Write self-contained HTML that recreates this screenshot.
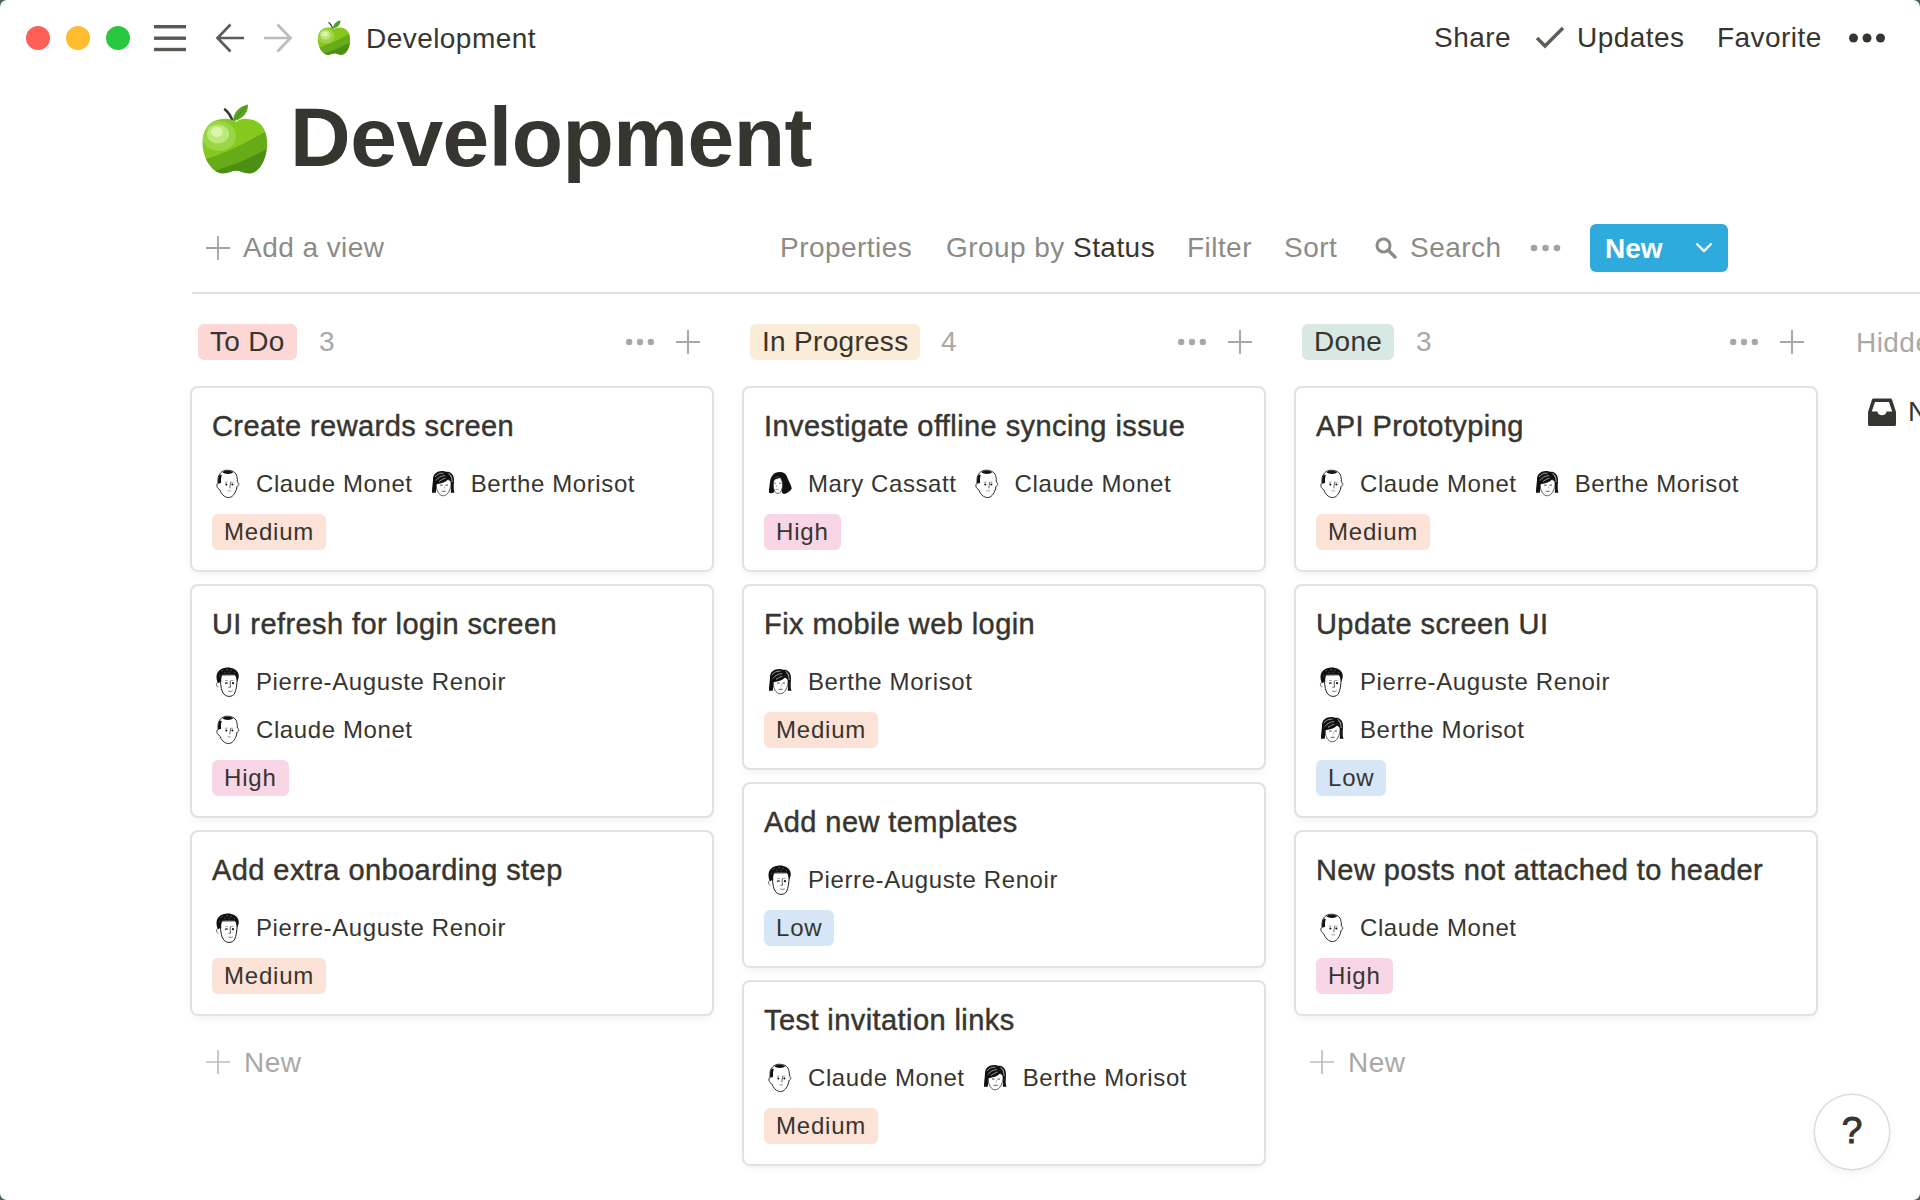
<!DOCTYPE html>
<html><head><meta charset="utf-8">
<style>
*{box-sizing:border-box;margin:0;padding:0}
html,body{width:1920px;height:1200px;overflow:hidden;background:#47636c}
body{font-family:"Liberation Sans",sans-serif;color:#37352f}
#win{position:absolute;left:0;top:0;width:1920px;height:1200px;background:#fff;border-radius:7px;overflow:hidden}
.abs{position:absolute}
.tl{position:absolute;top:26px;width:24px;height:24px;border-radius:50%}
.t28{font-size:28px;white-space:nowrap;letter-spacing:0.45px}
.grey{color:#8d8b87}
.col{position:absolute;top:388px;width:520px;display:flex;flex-direction:column;gap:16px}
.card{position:relative;background:#fff;border-radius:6px;box-shadow:0 0 0 2px #e2e2e1,0 4px 8px rgba(15,15,15,0.06);padding:10px 20px 20px 20px}
.ttl{font-size:29px;line-height:56px;height:56px;white-space:nowrap;-webkit-text-stroke:0.45px #37352f;letter-spacing:0.42px}
.rows{margin-top:6px}
.row{height:48px;display:flex;align-items:center;font-size:24px;white-space:nowrap;letter-spacing:0.6px}
.av{width:32px;height:32px;margin-right:12px;flex:none}
.p2{margin-left:14px}
.tag{display:inline-block;margin-top:6px;height:36px;line-height:36px;font-size:24px;padding:0 12px;border-radius:6px;white-space:nowrap;letter-spacing:0.8px}
.med{background:#fde2d7}
.high{background:#f9d6e6}
.low{background:#d7e6f6}
.hdr{position:absolute;top:324px;height:36px;line-height:36px;font-size:28px;padding:0 12px;border-radius:6px;white-space:nowrap;letter-spacing:0.3px}
.cnt{position:absolute;top:324px;line-height:36px;font-size:28px;color:#aaa9a6}
</style></head><body>
<svg width="0" height="0" style="position:absolute">
<defs>
<clipPath id="appleclip"><path d="M41,24 C36,20 30,20.5 24,21.5 C14,23 7.5,32 7.5,45 C7.5,58 15,72 25,75 C31,76.5 36,72.5 41,72.5 C46,72.5 51,76.5 57,75 C67,72 72,58 72,45 C72,32 66,23 56,21.5 C50,20.5 46,20 41,24Z"/></clipPath>
<symbol id="apple" viewBox="0 0 80 82">
<path d="M30,11.5 C33,14 36,18 37.6,23.5" stroke="#3a3a36" stroke-width="2.6" fill="none" stroke-linecap="round"/>
<path d="M38,23.5 C38,14 45,8 53,6.5 C53.5,15 47,21.5 38,23.5Z" fill="#5aa622"/>
<path d="M40,21 C44,16 48,12 51,9" stroke="#4a9418" stroke-width="1.2" fill="none"/>
<g clip-path="url(#appleclip)">
<rect x="0" y="0" width="80" height="82" fill="#86c91e"/>
<path d="M0,64 C25,58 50,46 80,28 V82 H0Z" fill="#67ab19"/>
<path d="M0,78 C25,72 55,62 80,46 V82 H0Z" fill="#4d8f15"/>
<ellipse cx="24" cy="38" rx="17" ry="15" fill="#9cd649" opacity="0.9"/>
<ellipse cx="23" cy="36" rx="11" ry="9.5" fill="#bde878"/>
<ellipse cx="22" cy="34" rx="6" ry="5" fill="#dcf5ad"/>
</g>
</symbol>
<symbol id="claude" viewBox="0 0 32 32">
<path d="M15,2.2 C10,2.2 6,6 6,12 L6,15.5 C4.3,16 4.5,19.5 6.8,21 C8,22 8.5,23 9,24.5 C11,28 14,29.6 16.6,29.6 C20,29.6 23,26 24.5,21 L25,18.2 C27.2,18 27.4,14.6 25.3,14 C25.5,11 25,8 24,6 C22,3 18,2.2 15,2.2Z" fill="#fff" stroke="#222" stroke-width="0.95"/>
<path d="M25.3,14.2 C26.8,15 26.6,17.6 25,18" fill="#ddd" stroke="none"/>
<path d="M10.5,4.2 C13,2.3 18,2.2 21,4.2 C19.5,6.5 12.5,6.5 10.5,4.2Z" fill="#111"/>
<path d="M7.8,6.5 C6.2,9 5.8,12 6.2,15.8 L9.2,14.8 C8.8,12 9,9 9.8,7Z" fill="#111"/>
<path d="M12.8,14.3 L15.5,14.1 M18.6,14.1 L21.4,14.3" stroke="#777" stroke-width="0.7"/>
<circle cx="14.3" cy="16.5" r="1.05" fill="#111"/><circle cx="20.4" cy="16.5" r="1.05" fill="#111"/>
<path d="M18.7,14.2 C18.2,16.5 18,18.5 17.8,20.3" stroke="#333" stroke-width="0.75" fill="none"/>
<path d="M15.4,22.6 C16.5,23.1 18,23.1 19,22.7" stroke="#888" stroke-width="0.8" fill="none"/>
</symbol>
<symbol id="berthe" viewBox="0 0 32 32">
<path d="M9,15 C8.8,22 12,27.8 16.2,27.8 C20.5,27.8 24,22 24.2,14 C22.5,11.5 20.5,11 19.5,12 C17.5,14 13,15 9,15Z" fill="#fff" stroke="#333" stroke-width="0.8"/>
<path d="M5,24.8 C5,20 6,14 6,11 C6,6 10,3 15,3 C17,3 18,3.6 19,3.8 C22,3 27,5 27,12 C27,17 26,21 27.5,24.8 L23.8,24.8 C24,21 24.5,16 23.6,13.4 C22.5,11.8 21,11.3 20,12.2 C18,14.3 14,15.3 9.6,16.2 C9,19 9.2,22 8.8,24.8Z" fill="#111"/>
<path d="M8,9 C10,6 13,5 16.5,5.2 M9,12.5 C11,9.5 14,8 18,7.5 M12,13.5 C14,12 16,11 18.5,10" stroke="#c8c8c8" stroke-width="0.7" fill="none"/>
<path d="M21.5,5.5 C24,7 25,10 25.2,14" stroke="#bbb" stroke-width="0.9" fill="none"/>
<path d="M22,6 C23.5,6.5 24.5,8 24.5,9.5" stroke="#999" stroke-width="0.8" fill="none"/>
<path d="M13,17 L15.5,17.1 M18.6,17.1 L21,17" stroke="#444" stroke-width="1"/>
<path d="M17.8,17.5 C17.6,19 17.4,20 17,20.8" stroke="#999" stroke-width="0.6" fill="none"/>
<path d="M14.6,23.3 L18.8,23.3" stroke="#555" stroke-width="0.9"/>
</symbol>
<symbol id="renoir" viewBox="0 0 32 32">
<path d="M5.8,16.6 C3.8,16.5 3.8,20.6 6.3,21.2" fill="#fff" stroke="#555" stroke-width="0.8"/>
<path d="M8.8,9 C8.3,15 8.5,22 10.5,26 C12,29 14.5,30.4 17,30.4 C20,30.4 22,29 22.8,27 C24,24 24.8,20 25,16 C25.3,12 24.8,9.5 23,8.8Z" fill="#fff" stroke="#222" stroke-width="1"/>
<path d="M15.5,1.6 C9,1.6 4.5,5.5 4.5,11 C4.5,13.5 5.2,16 6,17.2 L9.2,15.5 C9,12.5 9.4,10 10.4,8.8 C14,8.5 19,8.4 23,8.8 C24,10.5 24.8,13 25,15.5 C26.5,13.5 27,11 26.6,8.5 C25.6,4 21,1.6 15.5,1.6Z" fill="#111"/>
<path d="M9,5 L11,4.5 M14,3.5 L16,4 M18,4.5 L20,4 M7,10 L8,9 M12,6 L13.5,6.5 M22,6 L23,7 M16.5,6.5 L18,6" stroke="#777" stroke-width="0.6"/>
<path d="M13.2,14.6 L16,14.4 M19,14.4 L21.8,14.6" stroke="#888" stroke-width="0.7"/>
<path d="M13,17.4 C14,16.8 15.2,16.8 15.8,17.4" stroke="#222" stroke-width="1.3" fill="none"/>
<circle cx="21" cy="17.2" r="1.1" fill="#111"/>
<path d="M18.4,14.5 C18,17 18.2,19 18.6,21 L16.4,21.4" stroke="#333" stroke-width="0.8" fill="none"/>
<path d="M16.2,25 C17.5,25.5 19.5,25.5 20.7,25" stroke="#666" stroke-width="0.9" fill="none"/>
</symbol>
<symbol id="mary" viewBox="0 0 32 32">
<path d="M16,4 C9,4 6.5,9 6,14 C5.5,19 4.5,22 5,24.8 C6.5,25.6 8.5,25.4 10,24.2 L12,20 L17,20 C17.5,23 18,25 19,25.8 C22,26.4 25.5,24 27.8,20.5 C27,16 24.5,13 23.5,10 C22.5,6 19.5,4 16,4Z" fill="#111"/>
<ellipse cx="13.9" cy="17" rx="4.6" ry="8.6" fill="#fff" stroke="#333" stroke-width="0.7"/>
<path d="M9.4,12 C11,9.5 14,8 17,8.5 C16,10 13,11 9.4,12Z" fill="#111"/>
<path d="M10.1,15.3 L11.8,15.3 M15,15.3 L17.2,15.3" stroke="#555" stroke-width="0.8"/>
<path d="M12.6,17 L12.2,18.4 L13,18.6" stroke="#888" stroke-width="0.6" fill="none"/>
<path d="M11.6,21.3 L14.6,21.3" stroke="#777" stroke-width="0.8"/>
</symbol>
</defs>
</svg>
<div id="win">
<!-- traffic lights -->
<div class="tl" style="left:26px;background:#ff5f57"></div>
<div class="tl" style="left:66px;background:#febc2e"></div>
<div class="tl" style="left:106px;background:#28c840"></div>
<!-- hamburger -->
<svg class="abs" style="left:154px;top:24px" width="32" height="28" viewBox="0 0 32 28">
<rect x="0" y="1" width="32" height="3.4" fill="#5b5752"/><rect x="0" y="12.5" width="32" height="3.4" fill="#5b5752"/><rect x="0" y="23.8" width="32" height="3.4" fill="#5b5752"/>
</svg>
<!-- arrows -->
<svg class="abs" style="left:214px;top:22px" width="32" height="32" viewBox="0 0 32 32">
<path d="M30 16 H4 M16.5 2.5 L3.5 16 L16.5 29.5" stroke="#5f5c57" stroke-width="2.7" fill="none"/>
</svg>
<svg class="abs" style="left:262px;top:22px" width="32" height="32" viewBox="0 0 32 32">
<path d="M2 16 H28 M15.5 2.5 L28.5 16 L15.5 29.5" stroke="#bdbcb9" stroke-width="2.7" fill="none"/>
</svg>
<svg class="abs" style="left:314px;top:17px" width="40" height="41"><use href="#apple"/></svg>
<div class="abs t28" style="left:366px;top:18px;line-height:42px">Development</div>
<!-- right top -->
<div class="abs t28" style="left:1434px;top:17px;line-height:42px">Share</div>
<svg class="abs" style="left:1534px;top:26px" width="32" height="24" viewBox="0 0 32 24">
<path d="M3 12 L11 20 L29 2" stroke="#5f5c57" stroke-width="3.4" fill="none"/>
</svg>
<div class="abs t28" style="left:1577px;top:17px;line-height:42px">Updates</div>
<div class="abs t28" style="left:1717px;top:17px;line-height:42px">Favorite</div>
<svg class="abs" style="left:1848px;top:32px" width="40" height="12" viewBox="0 0 40 12">
<circle cx="5.5" cy="6" r="4.5" fill="#37352f"/><circle cx="19" cy="6" r="4.5" fill="#37352f"/><circle cx="32.5" cy="6" r="4.5" fill="#37352f"/>
</svg>

<!-- title -->
<svg class="abs" style="left:195px;top:98px" width="80" height="82"><use href="#apple"/></svg>
<div class="abs" style="left:290px;top:82px;font-size:84px;line-height:110px;font-weight:700;white-space:nowrap;letter-spacing:-0.5px">Development</div>

<!-- toolbar -->
<svg class="abs" style="left:206px;top:236px" width="24" height="24" viewBox="0 0 24 24"><path d="M12 0 V24 M0 12 H24" stroke="#a5a4a0" stroke-width="1.8"/></svg>
<div class="abs t28 grey" style="left:243px;top:224px;line-height:48px">Add a view</div>
<div class="abs t28 grey" style="left:780px;top:224px;line-height:48px">Properties</div>
<div class="abs t28 grey" style="left:946px;top:224px;line-height:48px">Group by <span style="color:#37352f">Status</span></div>
<div class="abs t28 grey" style="left:1187px;top:224px;line-height:48px">Filter</div>
<div class="abs t28 grey" style="left:1284px;top:224px;line-height:48px">Sort</div>
<svg class="abs" style="left:1374px;top:236px" width="24" height="24" viewBox="0 0 24 24"><circle cx="9.5" cy="9.5" r="6.5" stroke="#8d8b87" stroke-width="3" fill="none"/><path d="M14.5 14.5 L21 21" stroke="#8d8b87" stroke-width="3.4" stroke-linecap="round"/></svg>
<div class="abs t28 grey" style="left:1410px;top:224px;line-height:48px">Search</div>
<svg class="abs" style="left:1530px;top:242px" width="32" height="12" viewBox="0 0 32 12"><circle cx="4" cy="6" r="3.3" fill="#a5a4a0"/><circle cx="15.5" cy="6" r="3.3" fill="#a5a4a0"/><circle cx="27" cy="6" r="3.3" fill="#a5a4a0"/></svg>
<div class="abs" style="left:1590px;top:224px;width:138px;height:48px;background:#2eaadc;border-radius:6px"></div>
<div class="abs" style="left:1605px;top:225px;line-height:48px;font-size:28px;font-weight:700;color:#fff">New</div>
<svg class="abs" style="left:1694px;top:240px" width="20" height="14" viewBox="0 0 20 14"><path d="M2.5 3.5 L10 11 L17.5 3.5" stroke="#fff" stroke-width="2.3" fill="none"/></svg>
<div class="abs" style="left:192px;top:292px;width:1728px;height:2px;background:#e0e0df"></div>

<!-- column headers -->
<div class="hdr" style="left:198px;background:#fdd7d6">To Do</div>
<div class="cnt" style="left:319px">3</div>
<div class="hdr" style="left:750px;background:#fbecd7">In Progress</div>
<div class="cnt" style="left:941px">4</div>
<div class="hdr" style="left:1302px;background:#d7e9e2">Done</div>
<div class="cnt" style="left:1416px">3</div>

<svg class="abs" style="left:624px;top:336px" width="32" height="12" viewBox="0 0 32 12"><circle cx="5.2" cy="6" r="3.2" fill="#a9a8a5"/><circle cx="16" cy="6" r="3.2" fill="#a9a8a5"/><circle cx="26.8" cy="6" r="3.2" fill="#a9a8a5"/></svg>
<svg class="abs" style="left:676px;top:330px" width="24" height="24" viewBox="0 0 24 24"><path d="M12 0 V24 M0 12 H24" stroke="#a9a8a5" stroke-width="2.1"/></svg>
<svg class="abs" style="left:1176px;top:336px" width="32" height="12" viewBox="0 0 32 12"><circle cx="5.2" cy="6" r="3.2" fill="#a9a8a5"/><circle cx="16" cy="6" r="3.2" fill="#a9a8a5"/><circle cx="26.8" cy="6" r="3.2" fill="#a9a8a5"/></svg>
<svg class="abs" style="left:1228px;top:330px" width="24" height="24" viewBox="0 0 24 24"><path d="M12 0 V24 M0 12 H24" stroke="#a9a8a5" stroke-width="2.1"/></svg>
<svg class="abs" style="left:1728px;top:336px" width="32" height="12" viewBox="0 0 32 12"><circle cx="5.2" cy="6" r="3.2" fill="#a9a8a5"/><circle cx="16" cy="6" r="3.2" fill="#a9a8a5"/><circle cx="26.8" cy="6" r="3.2" fill="#a9a8a5"/></svg>
<svg class="abs" style="left:1780px;top:330px" width="24" height="24" viewBox="0 0 24 24"><path d="M12 0 V24 M0 12 H24" stroke="#a9a8a5" stroke-width="2.1"/></svg>

<div class="abs t28" style="left:1856px;top:325px;line-height:36px;color:#aaa9a6">Hidden</div>
<svg class="abs" style="left:1868px;top:398px" width="28" height="28" viewBox="0 0 28 28"><path d="M5.5 0.5 H22.5 Q23.5 0.5 24 1.5 L28 14 V26.5 Q28 28 26.5 28 H1.5 Q0 28 0 26.5 V14 L4 1.5 Q4.5 0.5 5.5 0.5Z M7 4 L3.8 13.5 H9.5 C9.5 18.5 18.5 18.5 18.5 13.5 H24.2 L21 4Z" fill="#37352f" fill-rule="evenodd"/></svg>
<div class="abs t28" style="left:1908px;top:391px;line-height:42px">New</div>

<!-- COLUMNS -->
<div class="col" style="left:192px">
 <div class="card"><div class="ttl">Create rewards screen</div>
  <div class="rows"><div class="row"><svg class="av"><use href="#claude"/></svg>Claude Monet<svg class="av p2"><use href="#berthe"/></svg>Berthe Morisot</div></div>
  <span class="tag med">Medium</span></div>
 <div class="card"><div class="ttl">UI refresh for login screen</div>
  <div class="rows"><div class="row"><svg class="av"><use href="#renoir"/></svg>Pierre-Auguste Renoir</div><div class="row"><svg class="av"><use href="#claude"/></svg>Claude Monet</div></div>
  <span class="tag high">High</span></div>
 <div class="card"><div class="ttl">Add extra onboarding step</div>
  <div class="rows"><div class="row"><svg class="av"><use href="#renoir"/></svg>Pierre-Auguste Renoir</div></div>
  <span class="tag med">Medium</span></div>
</div>

<div class="col" style="left:744px">
 <div class="card"><div class="ttl">Investigate offline syncing issue</div>
  <div class="rows"><div class="row"><svg class="av"><use href="#mary"/></svg>Mary Cassatt<svg class="av p2"><use href="#claude"/></svg>Claude Monet</div></div>
  <span class="tag high">High</span></div>
 <div class="card"><div class="ttl">Fix mobile web login</div>
  <div class="rows"><div class="row"><svg class="av"><use href="#berthe"/></svg>Berthe Morisot</div></div>
  <span class="tag med">Medium</span></div>
 <div class="card"><div class="ttl">Add new templates</div>
  <div class="rows"><div class="row"><svg class="av"><use href="#renoir"/></svg>Pierre-Auguste Renoir</div></div>
  <span class="tag low">Low</span></div>
 <div class="card"><div class="ttl">Test invitation links</div>
  <div class="rows"><div class="row"><svg class="av"><use href="#claude"/></svg>Claude Monet<svg class="av p2"><use href="#berthe"/></svg>Berthe Morisot</div></div>
  <span class="tag med">Medium</span></div>
</div>

<div class="col" style="left:1296px">
 <div class="card"><div class="ttl">API Prototyping</div>
  <div class="rows"><div class="row"><svg class="av"><use href="#claude"/></svg>Claude Monet<svg class="av p2"><use href="#berthe"/></svg>Berthe Morisot</div></div>
  <span class="tag med">Medium</span></div>
 <div class="card"><div class="ttl">Update screen UI</div>
  <div class="rows"><div class="row"><svg class="av"><use href="#renoir"/></svg>Pierre-Auguste Renoir</div><div class="row"><svg class="av"><use href="#berthe"/></svg>Berthe Morisot</div></div>
  <span class="tag low">Low</span></div>
 <div class="card"><div class="ttl">New posts not attached to header</div>
  <div class="rows"><div class="row"><svg class="av"><use href="#claude"/></svg>Claude Monet</div></div>
  <span class="tag high">High</span></div>
</div>

<!-- + New -->
<svg class="abs" style="left:206px;top:1050px" width="24" height="24" viewBox="0 0 24 24"><path d="M12 0 V24 M0 12 H24" stroke="#c0bfbc" stroke-width="1.7"/></svg>
<div class="abs t28 grey" style="left:244px;top:1039px;line-height:48px;color:#a9a8a5">New</div>
<svg class="abs" style="left:1310px;top:1050px" width="24" height="24" viewBox="0 0 24 24"><path d="M12 0 V24 M0 12 H24" stroke="#c0bfbc" stroke-width="1.7"/></svg>
<div class="abs t28 grey" style="left:1348px;top:1039px;line-height:48px;color:#a9a8a5">New</div>

<!-- help -->
<div class="abs" style="left:1815px;top:1095px;width:74px;height:74px;border-radius:50%;background:#fff;box-shadow:0 0 0 1.5px #dcdcdb,0 4px 10px rgba(15,15,15,0.06)"></div>
<div class="abs" style="left:1815px;top:1094px;width:74px;line-height:74px;text-align:center;font-size:37px;color:#37352f;-webkit-text-stroke:1px #37352f">?</div>
</div>
</body></html>
